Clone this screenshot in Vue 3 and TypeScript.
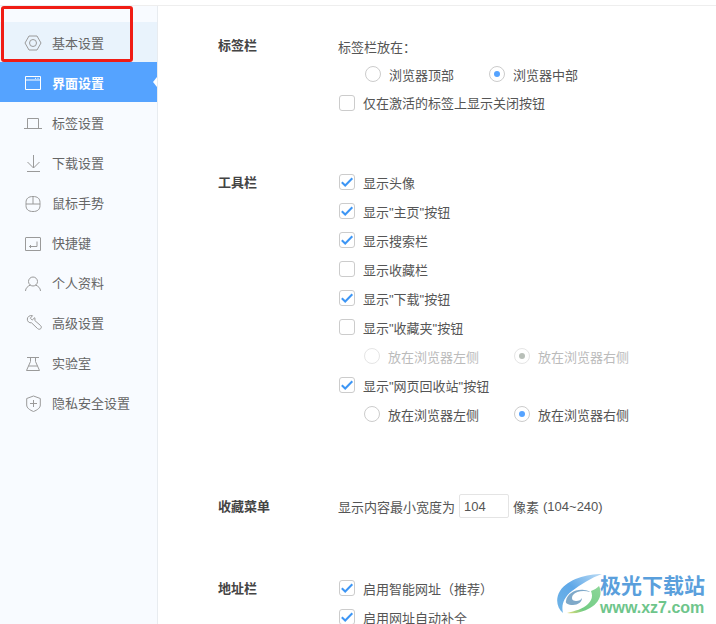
<template>
  <div class="page">
    <aside class="sidebar">
      <div
        v-for="item in navItems"
        :key="item.label"
        class="nav-item"
        :class="{ 'nav-item--hover': item.id === 'basic', 'nav-item--active': item.id === 'ui' }"
      >
        <svg class="nav-icon" viewBox="0 0 18 18" fill="none" stroke="currentColor" stroke-width="1">
          <path v-for="d in item.paths" :key="d" :d="d" />
        </svg>
        <span>{{ item.label }}</span>
      </div>
    </aside>

    <main class="content">
      <section class="group group--tabs">
        <h3 class="group-title">标签栏</h3>
        <div class="group-body">
          <div class="row">标签栏放在：</div>
          <div class="row radio-row radio-row--tabs">
            <label class="radio"><i class="radio-dot"></i>浏览器顶部</label>
            <label class="radio"><i class="radio-dot radio-dot--on"></i>浏览器中部</label>
          </div>
          <label class="row check check--close"><i class="check-box"></i>仅在激活的标签上显示关闭按钮</label>
        </div>
      </section>

      <section class="group group--tools">
        <h3 class="group-title group-title--tall">工具栏</h3>
        <div class="group-body">
          <template v-for="row in toolRows" :key="row.label">
            <label class="row row--tool check">
              <i class="check-box">
                <svg v-if="row.checked" viewBox="0 0 14 14" fill="none" stroke="#3d96f5" stroke-width="2">
                  <path d="M1.800 7.200L5.200 10.500L12.300 3.300" />
                </svg>
              </i>
              {{ row.label }}
            </label>
            <div v-if="row.side" class="row row--tool radio-row radio-row--side" :class="{ 'is-disabled': row.side === 'disabled' }">
              <label class="radio"><i class="radio-dot"></i>放在浏览器左侧</label>
              <label class="radio"><i class="radio-dot radio-dot--on"></i>放在浏览器右侧</label>
            </div>
          </template>
        </div>
      </section>

      <section class="group group--menu">
        <h3 class="group-title group-title--menu">收藏菜单</h3>
        <div class="group-body width-row">
          显示内容最小宽度为
          <input class="width-input" value="104" />
          像素 <span class="hint">(104~240)</span>
        </div>
      </section>

      <section class="group group--address">
        <h3 class="group-title group-title--tall">地址栏</h3>
        <div class="group-body">
          <label v-for="text in addressRows" :key="text" class="row row--tool check">
            <i class="check-box">
              <svg viewBox="0 0 14 14" fill="none" stroke="#3d96f5" stroke-width="2">
                <path d="M1.800 7.200L5.200 10.500L12.300 3.300" />
              </svg>
            </i>
            {{ text }}
          </label>
        </div>
      </section>
    </main>

    <!-- annotation -->
    <div class="red-box"></div>

    <!-- watermark -->
    <div class="watermark">
      <svg class="wm-logo" viewBox="0 0 45 40">
        <defs>
          <linearGradient id="wm-blue" x1="1" y1="0" x2="0" y2="1">
            <stop offset="0" stop-color="#bcdcf5" />
            <stop offset="0.5" stop-color="#5fa8e8" />
            <stop offset="1" stop-color="#6fb4e6" />
          </linearGradient>
          <linearGradient id="wm-green" x1="1" y1="0" x2="0" y2="1">
            <stop offset="0" stop-color="#8ed79a" />
            <stop offset="0.7" stop-color="#72cc84" />
            <stop offset="1" stop-color="#e6db78" />
          </linearGradient>
        </defs>
        <path d="M45 0C30 0 11 5 3 17c-5 8-3 17 3 22-2-8 1-16 9-22C24 10 34 4 45 0z" fill="url(#wm-blue)" />
        <path d="M9 27c1-7 9-12 18-11 3 0 5 1 6 2-6-2-14-1-17 3-2 3-1 6 3 6 3 0 5-1 6-3 0 4-4 7-9 7s-8-2-7-4z" fill="#7fa9c9" />
        <path d="M42 12c4 8 0 17-9 22-7 4-14 6-23 5 8-2 16-4 21-9 4-4 5-8 3-13 3-1 6-3 8-5z" fill="url(#wm-green)" />
      </svg>
      <div class="wm-text">
        <div class="wm-name">极光下载站</div>
        <div class="wm-url">www.xz7.com</div>
      </div>
    </div>
  </div>
</template>

<script setup lang="ts">
interface NavItem {
  id: string
  label: string
  paths: string[]
}

interface ToolRow {
  label: string
  checked: boolean
  side?: 'disabled' | 'enabled'
}

const navItems: NavItem[] = [
  { id: 'basic', label: '基本设置', paths: ['M5 2h8l4 7-4 7H5L1 9z', 'M9 5.500a3.500 3.500 0 1 0 0 7 3.500 3.500 0 0 0 0-7z'] },
  { id: 'ui', label: '界面设置', paths: ['M1.500 2.500h15v13h-15z', 'M1.500 6h15', 'M11 4.300h1M13.500 4.300h1'] },
  { id: 'tabs', label: '标签设置', paths: ['M3.500 14V4.500h11V14', 'M0 14.500h18'] },
  { id: 'download', label: '下载设置', paths: ['M9.500 1v13', 'M3.500 8l6 6 6-6', 'M3 17.500h13'] },
  { id: 'mouse', label: '鼠标手势', paths: ['M9 2.500c-4.500 0-7 2-7 6v3c0 4 2.500 6 7 6s7-2 7-6v-3c0-4-2.500-6-7-6z', 'M2 10h14', 'M9 2.500V10'] },
  { id: 'shortcut', label: '快捷键', paths: ['M2 3.500h14a.500.500 0 0 1 .500.500v12.500h-15V4a.500.500 0 0 1 .500-.500z', 'M13 7.500v5H5.500', 'M7 11l-1.500 1.500L7 14'] },
  { id: 'profile', label: '个人资料', paths: ['M9 3a4.500 4.500 0 1 0 0 9 4.500 4.500 0 0 0 0-9z', 'M1.500 17c0-3 2.500-5 5-6M16.500 17c0-3-2.500-5-5-6'] },
  { id: 'advanced', label: '高级设置', paths: ['M8.500 1.700C6 1 3.500 2.500 3.300 5c-.100 2.500 2 4.200 4.200 3.800l6 5.700c1 1 2.500 1 3.300.100s.700-2.300-.300-3.100l-5.700-5c.400-1 .200-2-.100-2.800L8.200 6 6.300 4.200z'] },
  { id: 'lab', label: '实验室', paths: ['M3 3.500h12', 'M6.500 3.500v4l-4 9h13l-4-9v-4', 'M4.500 12h9'] },
  { id: 'privacy', label: '隐私安全设置', paths: ['M9.500 2L2.700 4.500V11c0 3 3 5 6.800 6.500 3.800-1.500 6.800-3.500 6.800-6.500V4.500z', 'M9.500 6v7M6 9.500h7'] }
]

const toolRows: ToolRow[] = [
  { label: '显示头像', checked: true },
  { label: '显示"主页"按钮', checked: true },
  { label: '显示搜索栏', checked: true },
  { label: '显示收藏栏', checked: false },
  { label: '显示"下载"按钮', checked: true },
  { label: '显示"收藏夹"按钮', checked: false, side: 'disabled' },
  { label: '显示"网页回收站"按钮', checked: true, side: 'enabled' }
]

const addressRows: string[] = ['启用智能网址（推荐）', '启用网址自动补全']
</script>

<style>
html,
body {
  margin: 0;
  background: #fff;
  overflow: hidden;
}
</style>

<style scoped>
.page {
  position: relative;
  display: flex;
  width: 716px;
  height: 624px;
  overflow: hidden;
  box-sizing: border-box;
  padding-top: 5px;
  background: #fff;
  color: #555;
  font-family: "Liberation Sans", "Noto Sans CJK SC", sans-serif;
  font-size: 13px;
}

.page::before {
  content: '';
  position: absolute;
  top: 5px;
  left: 0;
  right: 0;
  border-top: 1px solid #eee;
}

.sidebar {
  flex: none;
  box-sizing: border-box;
  width: 158px;
  padding-top: 17px;
  background: #f8fbff;
  border-right: 1px solid #e8ecf0;
}

.nav-item {
  position: relative;
  display: flex;
  align-items: center;
  box-sizing: border-box;
  height: 40px;
  padding-left: 24px;
  gap: 10px;
  color: #666;
}

.nav-icon {
  flex: none;
  width: 18px;
  height: 18px;
  margin-top: 2px;
  color: #9a9a9a;
}

.nav-item--hover {
  background: #e9f3fc;
}

.nav-item--active {
  background: #55a3ff;
  color: #fff;
  font-weight: 700;
}

.nav-item--active .nav-icon {
  color: #fff;
}

.nav-item--active::after {
  content: '';
  position: absolute;
  right: 0;
  top: 15px;
  border-style: solid;
  border-color: transparent #fff transparent transparent;
  border-width: 5px 4px 5px 0;
}

.content {
  flex: 1;
  min-width: 0;
  padding-left: 60px;
}

.group {
  display: flex;
}

.group--tabs {
  padding-top: 30px;
}

.group--tools {
  padding-top: 53.5px;
}

.group--menu {
  padding-top: 65.5px;
  align-items: center;
}

.group--address {
  padding-top: 55.5px;
}

.group-title {
  flex: none;
  width: 120px;
  margin: 0;
  font-size: 13px;
  font-weight: 700;
  line-height: 22px;
  color: #444;
}

.group-title--tall {
  line-height: 29px;
}

.group-title--menu {
  padding-top: 2px;
}

.group-body {
  flex: 1;
  min-width: 0;
}

.row {
  display: flex;
  align-items: center;
  height: 22px;
  white-space: nowrap;
}

.row--tool {
  height: 29px;
}

.radio-row--tabs {
  height: 34px;
  padding-left: 27px;
  gap: 35px;
}

.radio-row--side {
  padding-left: 26px;
  gap: 35px;
}

.radio {
  display: flex;
  align-items: center;
  gap: 8px;
}

.radio-dot {
  flex: none;
  box-sizing: border-box;
  display: flex;
  align-items: center;
  justify-content: center;
  width: 16px;
  height: 16px;
  border: 1px solid #ccc;
  border-radius: 50%;
  background: #fff;
}

.radio-dot--on::after {
  content: '';
  width: 6px;
  height: 6px;
  border-radius: 50%;
  background: #55a3ff;
}

.is-disabled {
  color: #bbb;
}

.is-disabled .radio-dot {
  border-color: #e5e5e5;
}

.is-disabled .radio-dot--on::after {
  background: #b8bfb8;
}

.check {
  padding-left: 1px;
  gap: 8px;
}

.check--close {
  height: 23px;
}

.check-box {
  flex: none;
  box-sizing: border-box;
  display: block;
  width: 16px;
  height: 16px;
  border: 1px solid #ccc;
  border-radius: 3px;
  background: #fff;
}

.check-box svg {
  display: block;
  width: 14px;
  height: 14px;
}

.width-row {
  display: flex;
  align-items: center;
  gap: 4px;
  white-space: nowrap;
}

.width-input {
  box-sizing: border-box;
  width: 50px;
  height: 24px;
  margin: 0;
  padding: 0 4px;
  border: 1px solid #e4e4e4;
  border-radius: 2px;
  color: #555;
  font: 13px "Liberation Sans", sans-serif;
  outline: none;
}

.hint {
  font-size: 13px;
}

.red-box {
  position: absolute;
  left: 1px;
  top: 6px;
  box-sizing: border-box;
  width: 132px;
  height: 56px;
  border: 3px solid #f01c14;
  border-radius: 3px;
}

.watermark {
  position: absolute;
  left: 557px;
  top: 573px;
  display: flex;
}

.wm-logo {
  flex: none;
  width: 45px;
  height: 40px;
  margin: 1px -2px 0 0;
}

.wm-name {
  color: #5a9fdc;
  font-size: 21px;
  font-weight: 700;
  line-height: 26px;
  white-space: nowrap;
}

.wm-url {
  color: #6ec58b;
  font-size: 16px;
  font-weight: 700;
  line-height: 18px;
}
</style>
